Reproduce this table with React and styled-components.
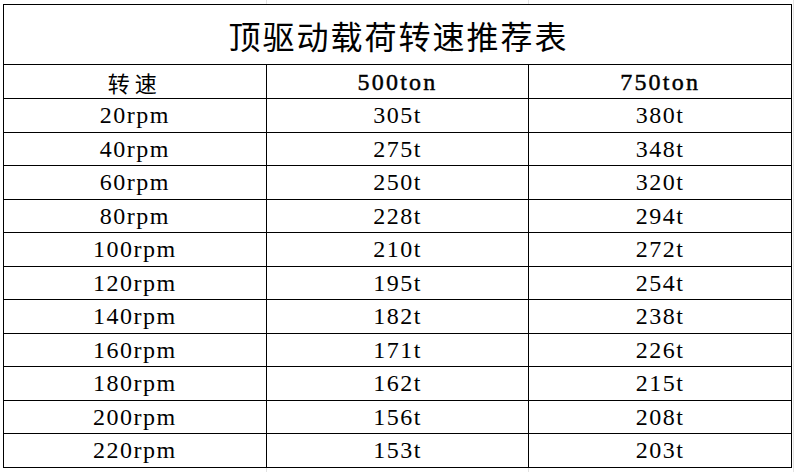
import React from 'react'
import styled, { createGlobalStyle } from 'styled-components'

const rows = [
  ['20rpm', '305t', '380t'],
  ['40rpm', '275t', '348t'],
  ['60rpm', '250t', '320t'],
  ['80rpm', '228t', '294t'],
  ['100rpm', '210t', '272t'],
  ['120rpm', '195t', '254t'],
  ['140rpm', '182t', '238t'],
  ['160rpm', '171t', '226t'],
  ['180rpm', '162t', '215t'],
  ['200rpm', '156t', '208t'],
  ['220rpm', '153t', '203t'],
]

// faint spreadsheet gridlines showing around the bordered table
const GlobalStyle = createGlobalStyle`
  html, body {
    margin: 0;
    padding: 0;
  }
  body {
    min-height: 472px;
    font-family: "Liberation Serif", "Noto Sans CJK SC", serif;
    color: #000;
    background:
      linear-gradient(to right, transparent 266px, #e3e3e3 266px, #e3e3e3 267px, transparent 267px),
      linear-gradient(to right, transparent 528px, #e3e3e3 528px, #e3e3e3 529px, transparent 529px),
      linear-gradient(to right, transparent 793px, #e3e3e3 793px, #e3e3e3 794px, transparent 794px),
      #fff;
  }
`

const Page = styled.div`
  padding: 4px 0 0 3px;
`

const Sheet = styled.table`
  border-collapse: collapse;
  table-layout: fixed;
  width: 789px;
  border: 1px solid #000;
  background: #fff;
`

const Cell = styled.td`
  border: 1px solid #000;
  padding: 0;
  text-align: center;
  vertical-align: middle;
  line-height: 1;
  white-space: nowrap;
`

const TitleCell = styled(Cell)`
  height: 59px;
  font-family: "Noto Sans CJK SC", sans-serif;
  font-size: 32px;
  letter-spacing: 2px;
  padding-left: 2px;
`

const HeadCell = styled(Cell)`
  height: 33px;
  font-size: ${(p) => (p.$cjk ? '22px' : '24px')};
  font-family: ${(p) =>
    p.$cjk ? '"Noto Sans CJK SC", sans-serif' : '"Liberation Serif", serif'};
  letter-spacing: ${(p) => (p.$cjk ? '5px' : '2.2px')};
  -webkit-text-stroke: ${(p) => (p.$cjk ? '0' : '0.45px #000')};
`

const DataCell = styled(Cell)`
  height: 32.5px;
  font-size: 24px;
  letter-spacing: 1.5px;
`

export default function App() {
  return (
    <>
      <GlobalStyle />
      <Page>
        <Sheet>
          <tbody>
            <tr>
              <TitleCell colSpan={3}>顶驱动载荷转速推荐表</TitleCell>
            </tr>
            <tr>
              <HeadCell $cjk>转速</HeadCell>
              <HeadCell>500ton</HeadCell>
              <HeadCell>750ton</HeadCell>
            </tr>
            {rows.map((r) => (
              <tr key={r[0]}>
                {r.map((v, i) => (
                  <DataCell key={i}>{v}</DataCell>
                ))}
              </tr>
            ))}
          </tbody>
        </Sheet>
      </Page>
    </>
  )
}
